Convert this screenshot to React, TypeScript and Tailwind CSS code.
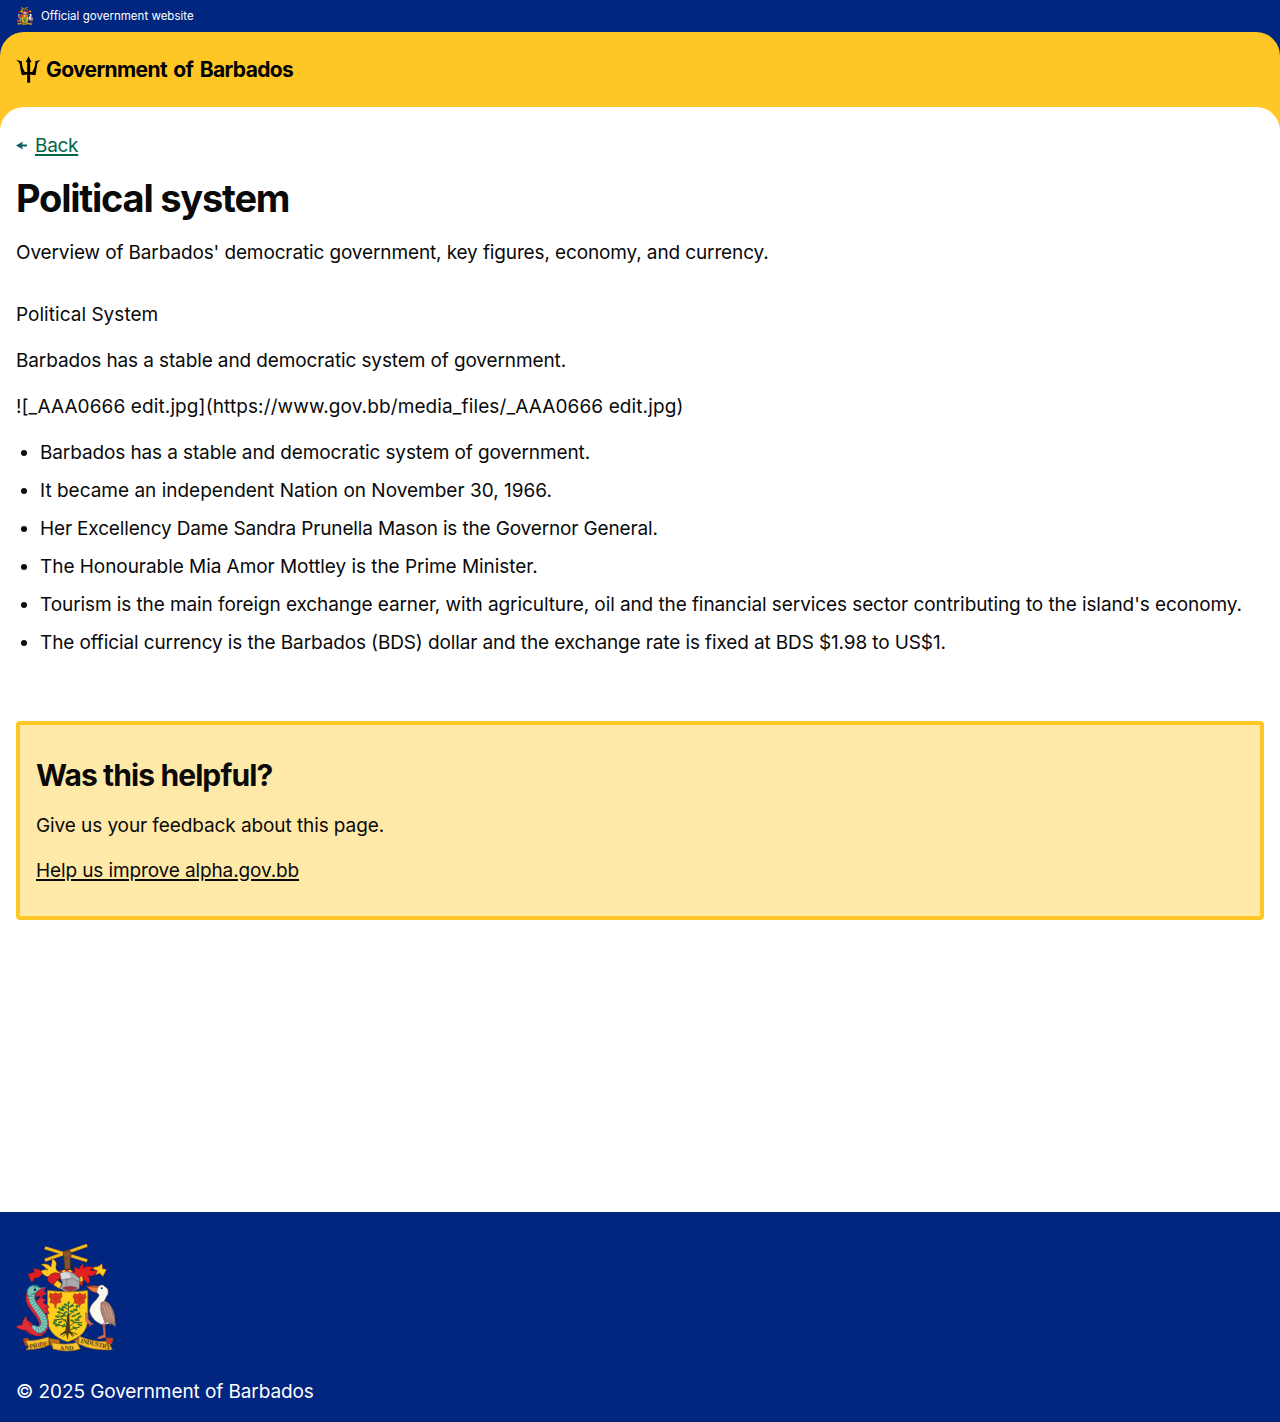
function CoatOfArms({ className }: { className: string }) {
  return (
    <svg viewBox="18 27 300 324" className={className} aria-label="Barbados coat of arms" preserveAspectRatio="none">
      {/* crossed sugar canes held by a fist */}
      <g stroke="#8a5a12" strokeWidth="11">
        <path d="M104 38L232 77" />
        <path d="M104 76L232 31" />
      </g>
      <g stroke="#f0b822" strokeWidth="8">
        <path d="M105 38L231 77" />
        <path d="M105 76L231 31" />
      </g>
      <path d="M160 53q3-9 11-7q12-3 13 10l-3 16l1 31l-18 2l-2-32z" fill="#7d4d2e" stroke="#4d2e18" strokeWidth="2" />
      <path d="M163 54l18 3M163 61l18 2M172 76v24" stroke="#a46b3b" strokeWidth="2" />

      {/* mantling */}
      <g stroke="#7d1b14" strokeWidth="1.5" strokeLinejoin="round">
        <path d="M152 112c-14-4-16-12-13-22c2-8-3-16-15-19c5 9-2 15-1 25c-8-10-19-12-31-7c12 3 14 12 22 16c-12-4-22 1-28 11c9-3 16 3 22 8c9 4 19-1 26 5z" fill="#ffcb1f" />
        <path d="M89 104l-20-4l5 12l-20 5l11 26l10-15c8 1 12-1 16-5c6-4 8-9 3-12z" fill="#e4201f" />
        <path d="M112 133c5-17 20-23 36-18l12 17l-16 1l-11 16c-10-1-18-7-21-16z" fill="#dc1f22" />
        <path d="M130 150l12-15l14 12l-7 15z" fill="#ffcb1f" />
        <path d="M190 124c-2-12 9-16 2-29l16 7c2-7 5-12 13-16l-2 15c10-9 21-7 36-1l-17 4c10 4 17 4 25 0c-4 15-18 22-30 18c9 9 8 18 1 25c-5-9-12-14-21-14l-20-2z" fill="#e4201f" />
        <path d="M251 96c11 0 18-2 25-11l2 16l12 2l-11 22l-10-10l-13 6l6-14l-12-4z" fill="#ffcb1f" />
        <path d="M209 127l14 6l-7 20l-16-10z" fill="#dc1f22" />
        <path d="M206 131l9-11l5 15l-8 8z" fill="#ffcb1f" />
      </g>

      {/* helmet and wreath */}
      <path d="M149 114q17-16 42 1l19 16l-2 30l-32 13l-28-14q14-11 6-24z" fill="#a9abae" stroke="#4b4e55" strokeWidth="2" />
      <path d="M151 117q10-7 18-5q15 3 12 16l-26 5z" fill="#d8d9d8" />
      <path d="M156 136l32-6l20 12M172 131l-4 22" stroke="#74777d" strokeWidth="2" fill="none" />
      <path d="M150 107l37-2l3 9q-20-10-38 0z" fill="#e4201f" />
      <path d="M158 106l8-1l-2 6l-8 1zM174 105l8 0l4 6l-8-1z" fill="#ffcb1f" />
      <path d="M155 159q24-12 50 0l-26 13z" fill="#9d3a44" />

      {/* shield */}
      <path d="M113 167l66 4l54-4v84c0 35-20 57-60 69c-40-12-60-34-60-69z" fill="#ffce1c" stroke="#b27e10" strokeWidth="2.5" />
      <g fill="#e2371f" stroke="#911b13" strokeWidth="1.5">
        <path d="M120 174l9 4l8-5l7 5l10-5l2 13l-6 7l3 9l-11 2l-6 7l-7-7l-9-1l3-10l-5-7z" />
        <path d="M193 176l9 3l7-5l8 5l9-3l2 12l-6 7l2 8l-10 3l-5 6l-8-7l-8-1l1-10l-5-7z" />
      </g>
      <g fill="none" stroke="#b5381c" strokeWidth="2">
        <path d="M125 185l12 5l11-5M127 196l10-5l10 5M137 181v19" />
        <path d="M198 187l12 5l11-5M200 198l10-5l10 5M210 183v19" />
      </g>
      <path d="M133 208h7l-1 13l-5-3zM205 209h6l-2 11z" fill="#d23b20" />

      {/* bearded fig tree */}
      <g stroke="#3c5a20" strokeWidth="3" fill="none" strokeLinecap="round">
        <path d="M175 204v85M175 268l-29-28M176 277l35-32M175 247l-29-18M175 243l29-27M175 224l-19-12M175 219l15-13M158 252l-26 3M190 263l26 0M174 276l-37-9M176 285l33-9" />
      </g>
      <path d="M173 236l4 0l3 51l13 16l-17-10l-3 19l-5-19l-18 9l17-16z" fill="#4d3b19" stroke="#38270f" />
      <g stroke="#3a7a2c" strokeWidth="6" strokeLinecap="round" fill="none">
        <path d="M175 205l2-3M170 211l-6-3M164 216l-7 3M181 215l8-3M160 226l-7-2M182 229l8 1M168 231l-6 5M192 224l8 2M150 233l-6-1M162 242l-8 2M187 244l8-3M201 238l7-3M145 246l-7-2M154 260l-7 3M197 254l9 2M205 248l7-4M139 257l-6 3M147 270l-9 2M205 268l9 3M164 269l-6 6M190 276l8 5M137 266l-6-1M184 256l5 2M166 256l-4 0M199 214l4-2M150 221l-3-2" />
      </g>
      <path d="M151 297l22-9l4 1l25 9M159 305l14-15M188 305l-11-16" stroke="#473713" strokeWidth="2.5" fill="none" />

      {/* dolphin supporter */}
      <path d="M79 197l15-12l13 12l-9 5l20 14l-9 3l9 16l-27-2z" fill="#e12736" stroke="#8c1d2b" strokeWidth="2" />
      <g fill="none" strokeLinecap="round">
        <path d="M64 176C50 214 104 232 102 268C100 294 72 294 52 272" stroke="#c42433" strokeWidth="29" />
        <path d="M65 176C53 212 105 232 103 266C101 284 86 289 72 281" stroke="#3c8e8c" strokeWidth="21" />
        <path d="M65 176C53 212 105 232 103 266C101 284 86 289 72 281" stroke="#86c9bd" strokeWidth="17" />
        <path d="M65 176C53 212 105 232 103 266C101 284 86 289 72 281" stroke="#3c8e8c" strokeWidth="17" strokeDasharray="2 6" strokeLinecap="butt" />
        <path d="M53 190C55 216 84 234 89 260" stroke="#d72c34" strokeWidth="6" />
      </g>
      <path d="M62 272c-8-8-12-16-13-28c-9 7-12 16-12 26c-8-1-14 1-19 6c12 7 23 12 35 9c12 15 28 21 46 17c-18-6-30-16-37-30z" fill="#e22d38" stroke="#7e1d2b" strokeWidth="1.5" />
      <path d="M52 178c-3-20 9-28 24-27l17 8l14-3l-6 12l8 9l-17 5l-16-7c-8 0-12 4-17 10z" fill="#78c2b7" stroke="#236b6d" strokeWidth="2" />
      <path d="M82 168l12-7l14-4l-7 11l9 9l-10 3l-5 9l-9-6l-8 4l-2-11z" fill="#cf2036" stroke="#5a1e2c" />
      <path d="M60 156l8-6l6 7l9-6l2 9" fill="none" stroke="#32807c" strokeWidth="3" />
      <circle cx="75" cy="164" r="3.5" fill="#0a1c3d" />

      {/* pelican supporter */}
      <path d="M230 154q23-4 37 0l10 8l-9 10q-21 5-38-18z" fill="#e77943" stroke="#923a1d" strokeWidth="2" />
      <path d="M230 154l35 3l10 7" fill="none" stroke="#963b1d" strokeWidth="3" />
      <path d="M263 159q5-11 16-9l14 12q5 13-5 25l-5 11c18 7 24 23 30 41l3 35l-12-9l-28 4q-29-12-37-39c-1-24 21-31 29-50l-8-9z" fill="#faf8ef" stroke="#777" strokeWidth="1.5" />
      <path d="M273 203c11-7 22-3 29 10c11 16 14 39 13 61l-11-13l-3 10l-9-12l-6 7l-7-20c-7-13-8-28-6-43z" fill="#b08070" stroke="#65483f" strokeWidth="1.5" />
      <path d="M280 211l14 42M288 210l15 43M297 214l13 43" stroke="#d8b5a5" strokeWidth="2" />
      <circle cx="275" cy="160" r="3" fill="#25252a" />
      <path d="M242 262l-8-9l-1-15l-6-5l1 27l8 6l14 2M279 265l3 35l-20 8l5 3l19-4l-2-41M242 263l-5 11l9-8" fill="#df7354" stroke="#c05a40" strokeWidth="2.5" />

      {/* motto ribbon */}
      <g stroke="#9a610d" strokeWidth="2" strokeLinejoin="round">
        <path d="M40 311l14-1l8 12l-14 12l-4-9z" fill="#d23524" />
        <path d="M47 317q35 1 69-11l1 25q-32 14-69 13l8-8z" fill="#f4bd2c" />
        <path d="M117 310l31 5l2 15l-27 2z" fill="#bd6e1b" />
        <path d="M125 323q49 9 76-1l10 20q-38 12-82 0z" fill="#f8c52f" />
        <path d="M207 309l-14 7l9 11l15-3z" fill="#bd6e1b" />
        <path d="M207 303q38 19 88 16l12 25q-60 4-101-17z" fill="#f4bd2c" />
        <path d="M288 309l21 1l-4 16l-15 2z" fill="#d23524" />
      </g>
      <g className="font-['Liberation_Serif'] font-bold" fontSize="19" fill="#5b3c0c">
        <text x="59" y="341" transform="rotate(-10 59 341)" textLength="57">PRIDE</text>
        <text x="149" y="346" textLength="42">AND</text>
        <text x="211" y="323" transform="rotate(13 211 323)" textLength="92">INDUSTRY</text>
      </g>
    </svg>
  );
}

function Trident() {
  return (
    <svg viewBox="48 168 76 81" className="h-[27px] w-[25px] shrink-0 overflow-visible" fill="#000" aria-hidden="true">
      <path d="M86 168l10 19l-5-2v31h6c6-10 10-20 10-29l-2-3l19-5c-8 5-11 9-12 17c-2 12-3 21-5 30l-16-2v25h-9v-25l-16 2c-3-9-4-18-6-30c-1-8-5-12-12-17l19 5l-1 3c0 9 3 19 9 29h7v-31l-5 2z" />
    </svg>
  );
}

const facts = [
  { text: "Barbados has a stable and democratic system of government.", tracking: "tracking-[-0.115px]" },
  { text: "It became an independent Nation on November 30, 1966.", tracking: "" },
  { text: "Her Excellency Dame Sandra Prunella Mason is the Governor General.", tracking: "tracking-[-0.15px]" },
  { text: "The Honourable Mia Amor Mottley is the Prime Minister.", tracking: "tracking-[-0.05px]" },
  {
    text: "Tourism is the main foreign exchange earner, with agriculture, oil and the financial services sector contributing to the island's economy.",
    tracking: "tracking-[-0.09px]",
  },
  {
    text: "The official currency is the Barbados (BDS) dollar and the exchange rate is fixed at BDS $1.98 to US$1.",
    tracking: "tracking-[-0.123px]",
  },
];

export default function App() {
  return (
    <div className="flex min-h-[1422px] flex-col bg-white font-['Inter',sans-serif] text-[19px] leading-[30px] text-[#0a0a0a]">
      <div className="bg-[#00267f]">
        <div className="flex h-8 items-center gap-2 px-4 text-[11.5px] leading-4 tracking-[0.02px] text-white">
          <CoatOfArms className="h-[18px] w-[17px]" />
          <span>Official government website</span>
        </div>
      </div>
      <div className="bg-[#00267f]">
        <header className="h-[75px] rounded-t-3xl bg-[#ffc726] px-4">
          <div className="flex h-[75px] items-center gap-[5px]">
            <Trident />
            <span className="text-[21px] font-bold tracking-[-0.62px] whitespace-nowrap text-black [word-spacing:2px]">
              Government of Barbados
            </span>
          </div>
        </header>
      </div>
      <div className="bg-[#ffc726]">
        <main className="rounded-t-3xl bg-white px-4 pt-6">
          <a href="#" className="flex w-fit items-center gap-2 text-[#00654a]">
            <svg viewBox="0 0 11 9" className="-mt-0.5 h-[9px] w-[11px]" fill="#0e5f64" aria-hidden="true">
              <path d="M0 4.5L7 0.5L6 3.5h5v2H6L7 8.5z" />
            </svg>
            <span className="tracking-[-0.3px] underline decoration-2 underline-offset-2">Back</span>
          </a>
          <h1 className="mt-3.5 text-[38px] leading-[46px] font-bold tracking-[-1.22px]">Political system</h1>
          <p className="mt-[17px] tracking-[-0.126px]">
            Overview of Barbados' democratic government, key figures, economy, and currency.
          </p>
          <p className="mt-8 tracking-[0.03px]">Political System</p>
          <p className="mt-4 tracking-[-0.115px]">Barbados has a stable and democratic system of government.</p>
          <p className="mt-4 tracking-[0.11px]">
            ![_AAA0666 edit.jpg](https://www.gov.bb/media_files/_AAA0666 edit.jpg)
          </p>
          <ul className="mt-4 flex flex-col gap-2">
            {facts.map(({ text, tracking }) => (
              <li key={text} className="flex items-center whitespace-nowrap">
                <span className="mr-[13px] ml-[5px] size-1.5 shrink-0 rounded-full bg-[#0a0a0a]" />
                <span className={tracking}>{text}</span>
              </li>
            ))}
          </ul>
          <section className="mt-[63px] h-[199px] rounded border-4 border-[#ffc726] bg-[#ffe9a8] px-4 pt-[30px]">
            <h2 className="text-[30px] leading-10 font-bold tracking-[-0.9px]">Was this helpful?</h2>
            <p className="mt-4 tracking-[-0.09px]">Give us your feedback about this page.</p>
            <a href="#" className="mt-[15px] block w-fit tracking-[-0.12px] underline decoration-2 underline-offset-2">
              Help us improve alpha.gov.bb
            </a>
          </section>
        </main>
      </div>
      <footer className="mt-auto h-[210px] bg-[#00267f] px-4 pt-8 text-white">
        <CoatOfArms className="h-[108px] w-[100px]" />
        <p className="mt-[25px] tracking-[-0.09px]">© 2025 Government of Barbados</p>
      </footer>
    </div>
  );
}
